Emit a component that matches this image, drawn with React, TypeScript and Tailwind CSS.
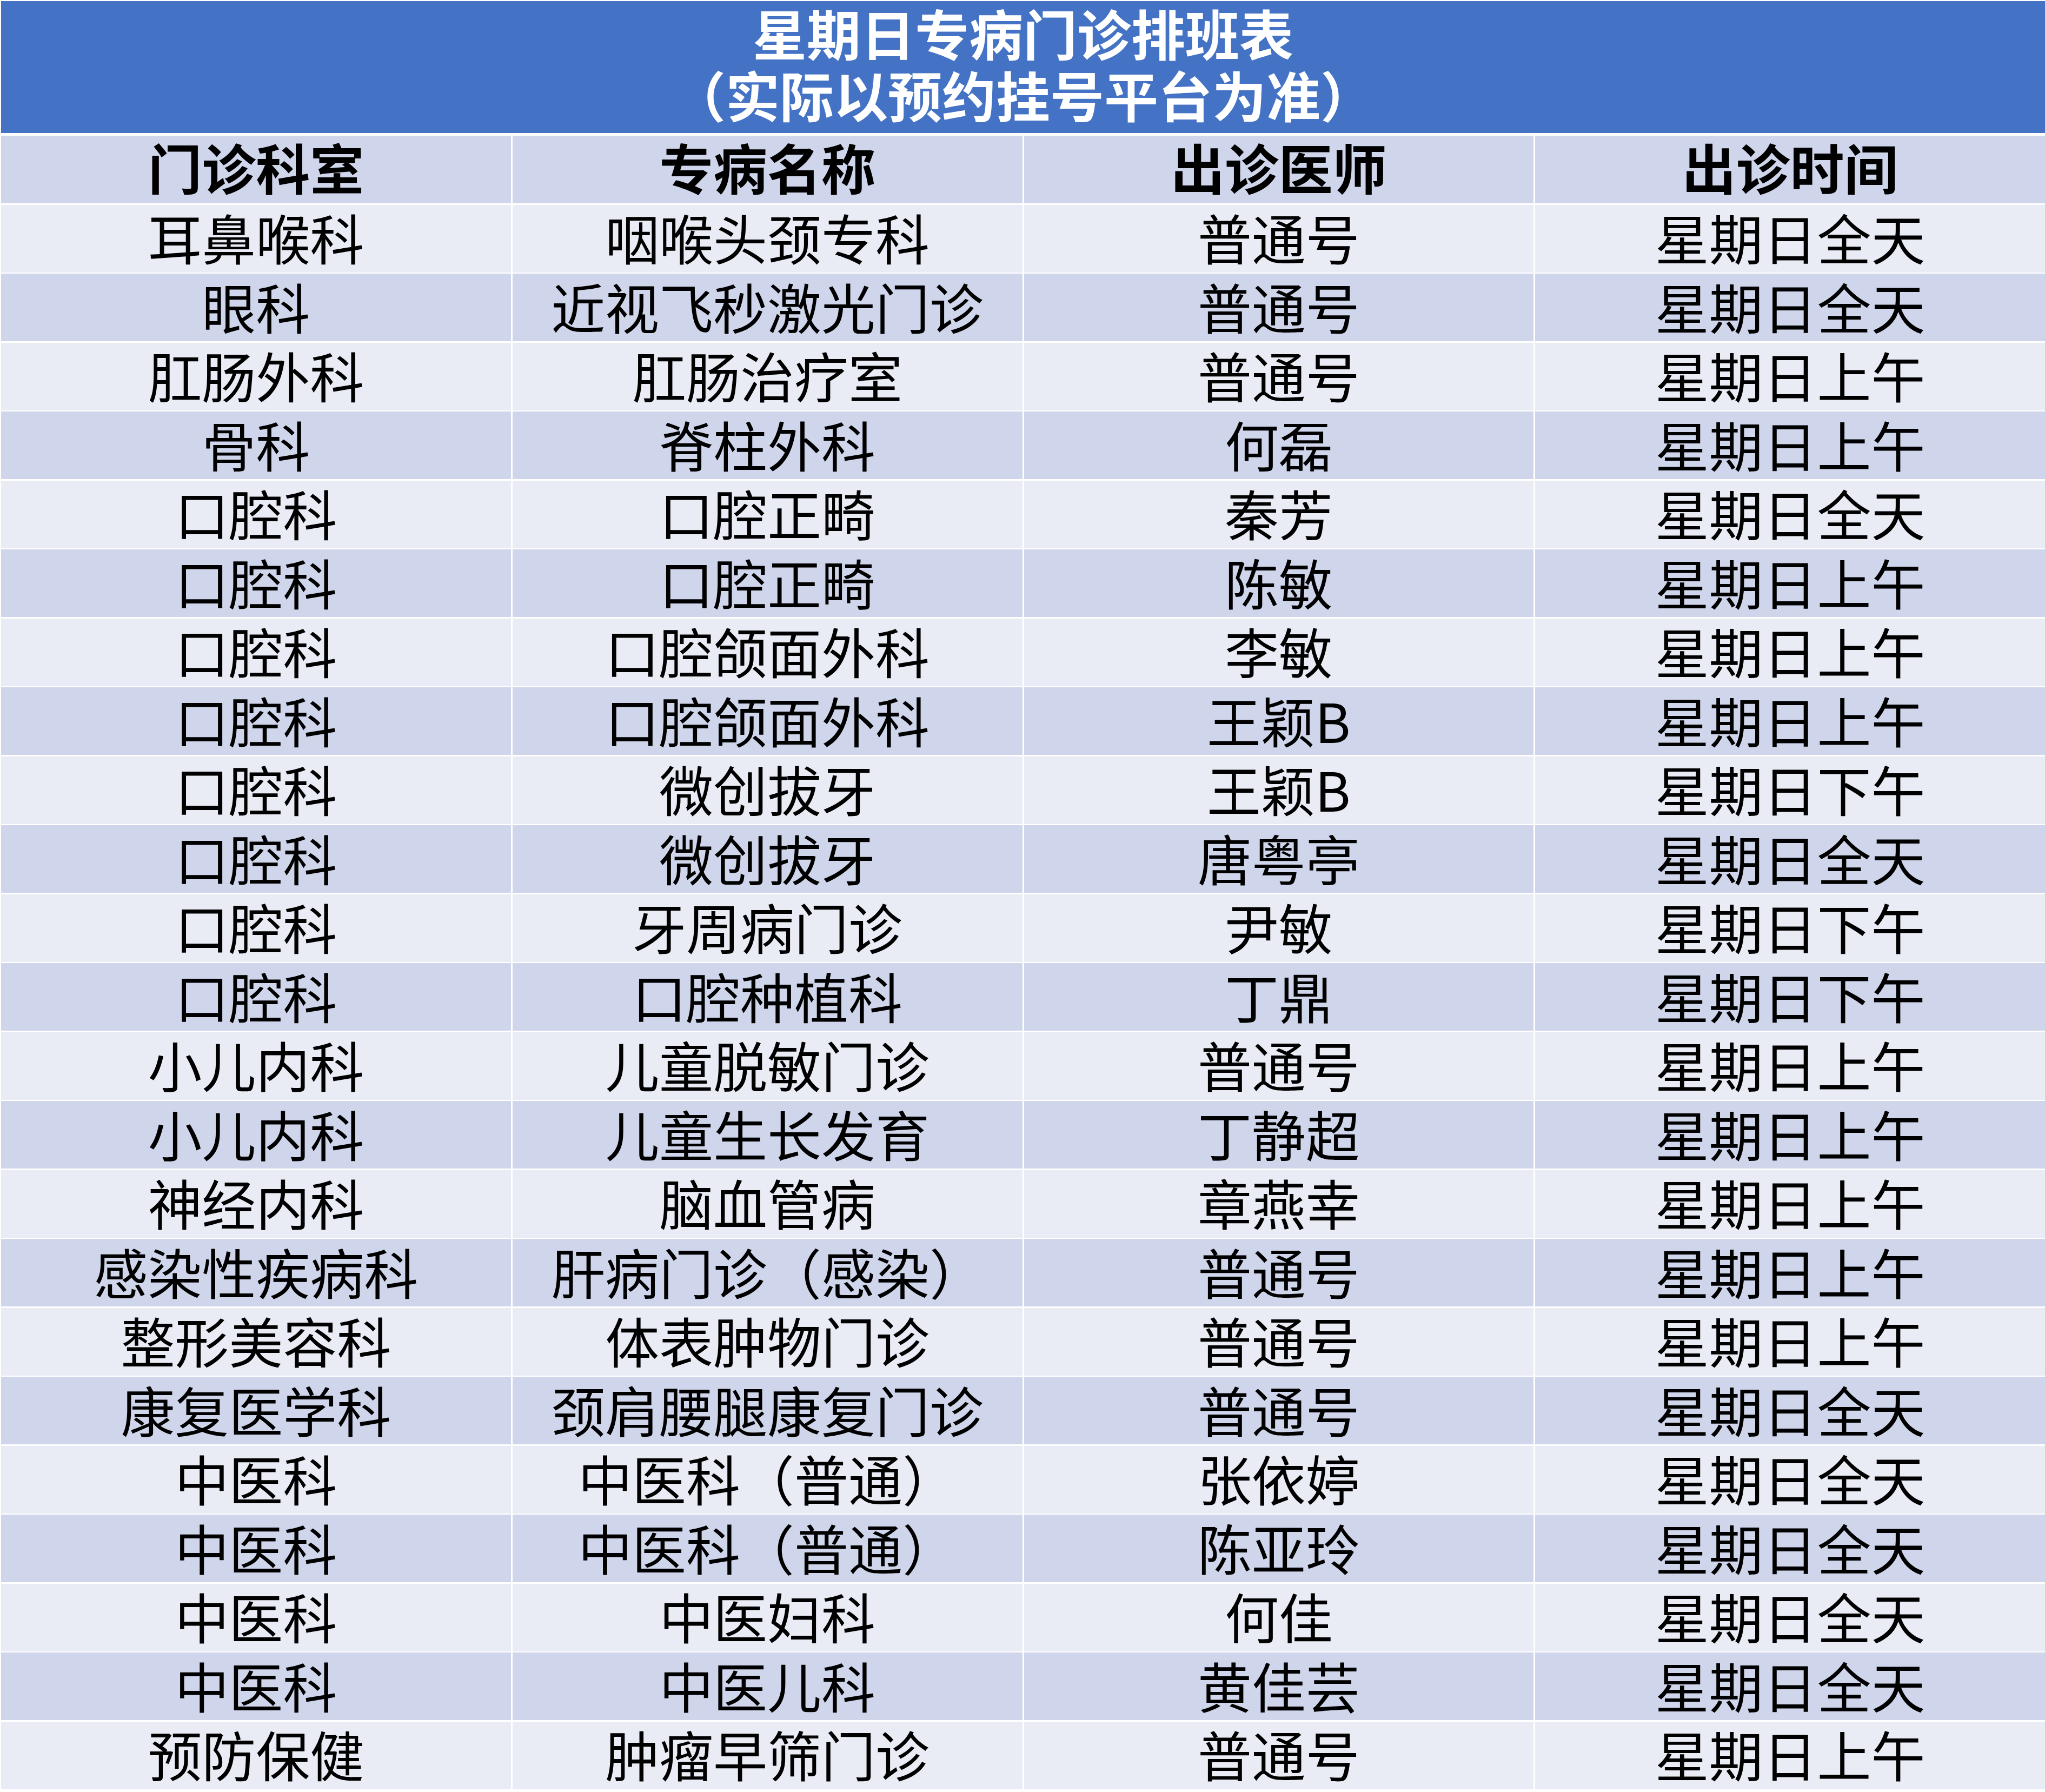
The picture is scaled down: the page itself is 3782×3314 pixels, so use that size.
import React from 'react';

const HEADERS = ['门诊科室', '专病名称', '出诊医师', '出诊时间'];

const ROWS: string[][] = [
  ['耳鼻喉科', '咽喉头颈专科', '普通号', '星期日全天'],
  ['眼科', '近视飞秒激光门诊', '普通号', '星期日全天'],
  ['肛肠外科', '肛肠治疗室', '普通号', '星期日上午'],
  ['骨科', '脊柱外科', '何磊', '星期日上午'],
  ['口腔科', '口腔正畸', '秦芳', '星期日全天'],
  ['口腔科', '口腔正畸', '陈敏', '星期日上午'],
  ['口腔科', '口腔颌面外科', '李敏', '星期日上午'],
  ['口腔科', '口腔颌面外科', '王颖B', '星期日上午'],
  ['口腔科', '微创拔牙', '王颖B', '星期日下午'],
  ['口腔科', '微创拔牙', '唐粤亭', '星期日全天'],
  ['口腔科', '牙周病门诊', '尹敏', '星期日下午'],
  ['口腔科', '口腔种植科', '丁鼎', '星期日下午'],
  ['小儿内科', '儿童脱敏门诊', '普通号', '星期日上午'],
  ['小儿内科', '儿童生长发育', '丁静超', '星期日上午'],
  ['神经内科', '脑血管病', '章燕幸', '星期日上午'],
  ['感染性疾病科', '肝病门诊（感染）', '普通号', '星期日上午'],
  ['整形美容科', '体表肿物门诊', '普通号', '星期日上午'],
  ['康复医学科', '颈肩腰腿康复门诊', '普通号', '星期日全天'],
  ['中医科', '中医科（普通）', '张依婷', '星期日全天'],
  ['中医科', '中医科（普通）', '陈亚玲', '星期日全天'],
  ['中医科', '中医妇科', '何佳', '星期日全天'],
  ['中医科', '中医儿科', '黄佳芸', '星期日全天'],
  ['预防保健', '肿瘤早筛门诊', '普通号', '星期日上午'],
];

const font = "font-['Noto_Sans_CJK_SC','Noto_Sans',sans-serif]";

export default function App() {
  return (
    <div className={`w-full bg-white pl-[2px] pt-[2px] pb-[3px] ${font}`}>
      {/* Title */}
      <div className="h-[244px] bg-[#4472C4] flex flex-col items-center justify-center text-white font-bold text-[100px] leading-[114px] pb-[14px]">
        <div>星期日专病门诊排班表</div>
        <div>（实际以预约挂号平台为准）</div>
      </div>

      {/* Table */}
      <div className="mt-[5px] grid grid-cols-4 gap-x-[3px] gap-y-[2.5px] auto-rows-[125px] text-black text-[100px]">
        {HEADERS.map((h) => (
          <div key={h} className="bg-[#CFD5EA] flex items-center justify-center font-bold leading-[112px] pb-[12px]">
            {h}
          </div>
        ))}
        {ROWS.map((row, i) =>
          row.map((cell, j) => (
            <div
              key={`${i}-${j}`}
              className={`flex items-center justify-center leading-[112px] pb-[6px] whitespace-nowrap ${
                i % 2 === 0 ? 'bg-[#E9EBF5]' : 'bg-[#CFD5EA]'
              }`}
            >
              {cell}
            </div>
          ))
        )}
      </div>
    </div>
  );
}
